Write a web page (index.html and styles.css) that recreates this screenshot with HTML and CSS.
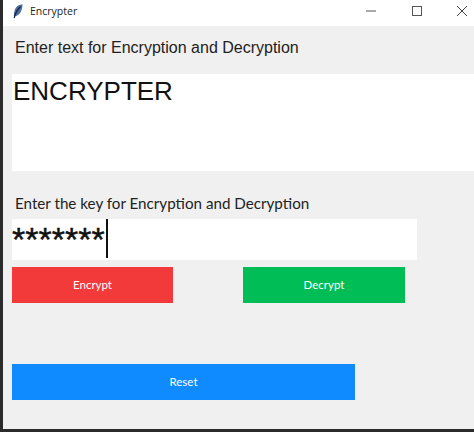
FILE: index.html
```html
<!DOCTYPE html>
<html lang="en">
<head>
  <meta charset="UTF-8">
  <title>Encrypter</title>
  <link rel="stylesheet" href="styles.css">
</head>
<body>
  <div class="window">
    <!-- Title bar -->
    <div class="titlebar">
      <svg class="feather" width="10" height="15" viewBox="0 0 10 15">
        <path d="M1 14.5 C0.6 11 1 6 3 3.5 C4.5 1.7 6.5 0.8 9.5 0.3 C9.6 3.5 8.6 7.5 6.5 9.8 C5 11.4 3.5 12 2 12.2 C1.7 13 1.5 13.8 1.4 14.5 Z" fill="#4a6f9e"/>
        <path d="M1.3 14 C2 10 4 6 7.5 2.5" stroke="#15233a" stroke-width="1.1" fill="none"/>
      </svg>
      <span class="title">Encrypter</span>
      <div class="controls">
        <svg width="12" height="12" viewBox="0 0 12 12"><path d="M1 6H11" stroke="#555" stroke-width="1"/></svg>
        <svg width="12" height="12" viewBox="0 0 12 12"><rect x="1.5" y="1.5" width="9" height="9" fill="none" stroke="#555" stroke-width="1"/></svg>
        <svg width="12" height="12" viewBox="0 0 12 12"><path d="M1 1L11 11M11 1L1 11" stroke="#444" stroke-width="1"/></svg>
      </div>
    </div>

    <div class="content">
      <div class="label-text">Enter text for Encryption and Decryption</div>
      <div class="textbox">ENCRYPTER</div>

      <div class="label-key">Enter the key for Encryption and Decryption</div>
      <div class="keybox"><span class="stars">*******</span><span class="caret"></span></div>

      <div class="btn-row">
        <button class="btn encrypt">Encrypt</button>
        <button class="btn decrypt">Decrypt</button>
      </div>
      <button class="btn reset">Reset</button>
    </div>
  </div>
</body>
</html>
```

FILE: styles.css
```css
html, body {
  margin: 0;
  padding: 0;
  background: #f0f0f0;
}

.window {
  width: 474px;
  height: 432px;
  box-sizing: border-box;
  border-left: 3px solid #2b2b2b;
  border-bottom: 3px solid #2b2b2b;
  display: flex;
  flex-direction: column;
  overflow: hidden;
}

.titlebar {
  height: 26px;
  box-sizing: border-box;
  background: #fff;
  display: flex;
  align-items: center;
  padding-left: 10px;
  padding-bottom: 4px;
  flex: none;
}

.feather {
  margin-right: 7px;
}

.title {
  font-family: "Open Sans", sans-serif;
  font-size: 10.5px;
  color: #222;
}

.controls {
  margin-left: auto;
  display: flex;
  gap: 33.5px;
  padding-right: 6px;
}

.content {
  flex: 1;
  background: #f0f0f0;
  padding-left: 9px;
}

.label-text {
  font-family: "Liberation Sans", Arial, sans-serif;
  font-size: 16px;
  line-height: 20px;
  color: #222;
  padding: 12px 0 0 3px;
}

.textbox {
  margin-top: 16px;
  height: 97px;
  background: #fff;
  padding-left: 1px;
  font-family: "Liberation Sans", Arial, sans-serif;
  font-size: 26px;
  line-height: 34px;
  color: #111;
}

.label-key {
  font-family: Lato, sans-serif;
  font-size: 15.2px;
  line-height: 20px;
  color: #222;
  padding: 22px 0 0 3px;
}

.keybox {
  margin-top: 6px;
  width: 405px;
  height: 41px;
  background: #fff;
  display: flex;
  font-family: "Liberation Sans", Arial, sans-serif;
  font-size: 34px;
  line-height: 40px;
  color: #111;
}

.stars {
  -webkit-text-stroke: 0.4px #111;
}

.caret {
  width: 2px;
  height: 39px;
  margin-left: 1px;
  background: #111;
}

.btn-row {
  margin-top: 7px;
  display: flex;
  gap: 70px;
}

.btn {
  display: block;
  height: 36px;
  border: none;
  padding: 0 0 2px;
  color: #fff;
  font-family: Lato, sans-serif;
  font-size: 11.5px;
}

.encrypt {
  width: 161px;
  background: #f33a3a;
}

.decrypt {
  width: 162px;
  background: #00bd56;
}

.reset {
  width: 343px;
  margin-top: 61px;
  background: #0f8aff;
}
```
